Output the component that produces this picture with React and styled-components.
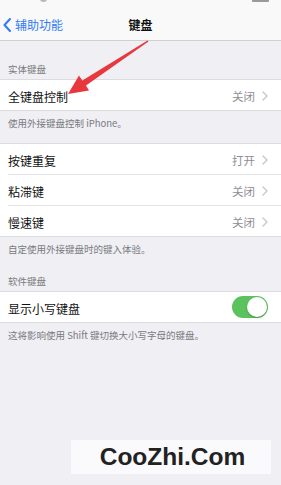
import React from "react";
import styled, { createGlobalStyle } from "styled-components";

const GlobalStyle = createGlobalStyle`
  html, body {
    margin: 0;
    padding: 0;
    background: #efeff4;
  }
  body {
    font-family: "Noto Sans CJK SC", "Noto Sans", "Liberation Sans", sans-serif;
  }
`;

const rows = [
  { label: "按键重复", value: "打开" },
  { label: "粘滞键", value: "关闭" },
  { label: "慢速键", value: "关闭" },
];

function Chevron() {
  return (
    <svg width="6" height="10" viewBox="0 0 6 10">
      <polyline
        points="1,1 5,5 1,9"
        fill="none"
        stroke="#c7c7cc"
        strokeWidth="1.4"
        strokeLinecap="round"
        strokeLinejoin="round"
      />
    </svg>
  );
}

function LinkRow({ label, value, last }) {
  return (
    <StyledRow $last={last}>
      <StyledLabel>{label}</StyledLabel>
      <StyledValue>
        {value}
        <Chevron />
      </StyledValue>
    </StyledRow>
  );
}

export default function App() {
  return (
    <>
      <GlobalStyle />
      <StyledPage>
        <StyledNavBar>
          <StyledStatusBits>
            <StyledDot />
            <StyledBattery />
          </StyledStatusBits>
          <StyledBack>
            <svg width="8" height="14" viewBox="0 0 8 14">
              <polyline
                points="7,1 1.5,7 7,13"
                fill="none"
                stroke="#2f7cf6"
                strokeWidth="2"
                strokeLinecap="round"
                strokeLinejoin="round"
              />
            </svg>
            辅助功能
          </StyledBack>
          <StyledTitle>键盘</StyledTitle>
        </StyledNavBar>

        <StyledSection>
          <StyledHeader>实体键盘</StyledHeader>
          <StyledGroup>
            <LinkRow label="全键盘控制" value="关闭" last />
          </StyledGroup>
          <StyledFooter>使用外接键盘控制 iPhone。</StyledFooter>
        </StyledSection>

        <StyledSection $gap>
          <StyledGroup>
            {rows.map((r, i) => (
              <LinkRow
                key={r.label}
                label={r.label}
                value={r.value}
                last={i === rows.length - 1}
              />
            ))}
          </StyledGroup>
          <StyledFooter>自定使用外接键盘时的键入体验。</StyledFooter>
        </StyledSection>

        <StyledSection>
          <StyledHeader>软件键盘</StyledHeader>
          <StyledGroup>
            <StyledRow $last>
              <StyledLabel>显示小写键盘</StyledLabel>
              <StyledToggle>
                <StyledKnob />
              </StyledToggle>
            </StyledRow>
          </StyledGroup>
          <StyledFooter>这将影响使用 Shift 键切换大小写字母的键盘。</StyledFooter>
        </StyledSection>

        <StyledWatermark>CooZhi.Com</StyledWatermark>

        {/* red annotation arrow drawn over the list */}
        <StyledArrow width="281" height="120" viewBox="0 0 281 120">
          <polygon
            points="68,94 89,90.5 86,85.6 148.5,41.6 147.5,40.4 82.3,80.6 79,75.5"
            fill="#e8383d"
          />
        </StyledArrow>
      </StyledPage>
    </>
  );
}

const StyledPage = styled.div`
  position: relative;
  width: 281px;
  height: 485px;
  overflow: hidden;
  display: flex;
  flex-direction: column;
  background: #efeff4;
`;

const StyledNavBar = styled.div`
  position: relative;
  box-sizing: border-box;
  height: 41px;
  padding-top: 18px;
  background: #f9f9f9;
  border-bottom: 1px solid #cfcfd4;
  display: flex;
  align-items: flex-start;
  justify-content: center;
  margin-bottom: 8px;
`;

const StyledStatusBits = styled.div`
  position: absolute;
  top: 0;
  left: 0;
  right: 0;
  height: 4px;
`;

const StyledDot = styled.div`
  position: absolute;
  left: 40px;
  top: -4px;
  width: 7px;
  height: 6px;
  border-radius: 50%;
  background: #b8b8bc;
`;

const StyledBattery = styled.div`
  position: absolute;
  right: 12px;
  top: -2px;
  width: 17px;
  height: 4px;
  border-radius: 1px;
  background: #9a9a9e;
`;

const StyledBack = styled.div`
  position: absolute;
  left: 3px;
  top: 18px;
  display: flex;
  align-items: center;
  gap: 4px;
  font-size: 12px;
  line-height: 14px;
  color: #2f7cf6;
`;

const StyledTitle = styled.div`
  font-size: 12px;
  line-height: 14px;
  font-weight: 600;
  color: #111;
`;

const StyledSection = styled.div`
  display: flex;
  flex-direction: column;
  margin-top: ${({ $gap }) => ($gap ? "8px" : "0")};
`;

const StyledHeader = styled.div`
  box-sizing: border-box;
  height: 30px;
  padding: 0 8px 4px;
  display: flex;
  align-items: flex-end;
  font-size: 9.5px;
  line-height: 12px;
  color: #7a7a80;
`;

const StyledGroup = styled.div`
  background: #ffffff;
  border-top: 1px solid #dcdce0;
  border-bottom: 1px solid #dcdce0;
`;

const StyledRow = styled.div`
  box-sizing: border-box;
  height: ${({ $last }) => ($last ? "30px" : "31px")};
  margin-left: 8px;
  padding-right: 13px;
  display: flex;
  align-items: center;
  justify-content: space-between;
  border-bottom: ${({ $last }) => ($last ? "none" : "1px solid #e4e4e8")};
`;

const StyledLabel = styled.span`
  font-size: 12px;
  color: #111;
  padding-top: 2px;
`;

const StyledValue = styled.span`
  display: flex;
  align-items: center;
  gap: 7px;
  font-size: 11.5px;
  color: #8e8e93;
  padding-top: 2px;
`;

const StyledFooter = styled.div`
  padding: 6px 8px;
  font-size: 9.5px;
  line-height: 12px;
  color: #7a7a80;
`;

const StyledToggle = styled.div`
  box-sizing: border-box;
  width: 36px;
  height: 22px;
  border-radius: 11px;
  background: #5bc25d;
  padding: 1px;
  display: flex;
  justify-content: flex-end;
`;

const StyledKnob = styled.div`
  width: 20px;
  height: 20px;
  border-radius: 50%;
  background: #ffffff;
  box-shadow: 0 1px 2px rgba(0, 0, 0, 0.25);
`;

const StyledWatermark = styled.div`
  margin-top: auto;
  margin-bottom: 11px;
  margin-left: 71px;
  width: 200px;
  height: 34px;
  background: #fafafc;
  display: flex;
  align-items: center;
  justify-content: center;
  padding-left: 3px;
  box-sizing: border-box;
  font-family: "Liberation Sans", Arial, sans-serif;
  font-weight: 700;
  font-size: 24.5px;
  color: #222;
`;

const StyledArrow = styled.svg`
  position: absolute;
  top: 0;
  left: 0;
  pointer-events: none;
`;
